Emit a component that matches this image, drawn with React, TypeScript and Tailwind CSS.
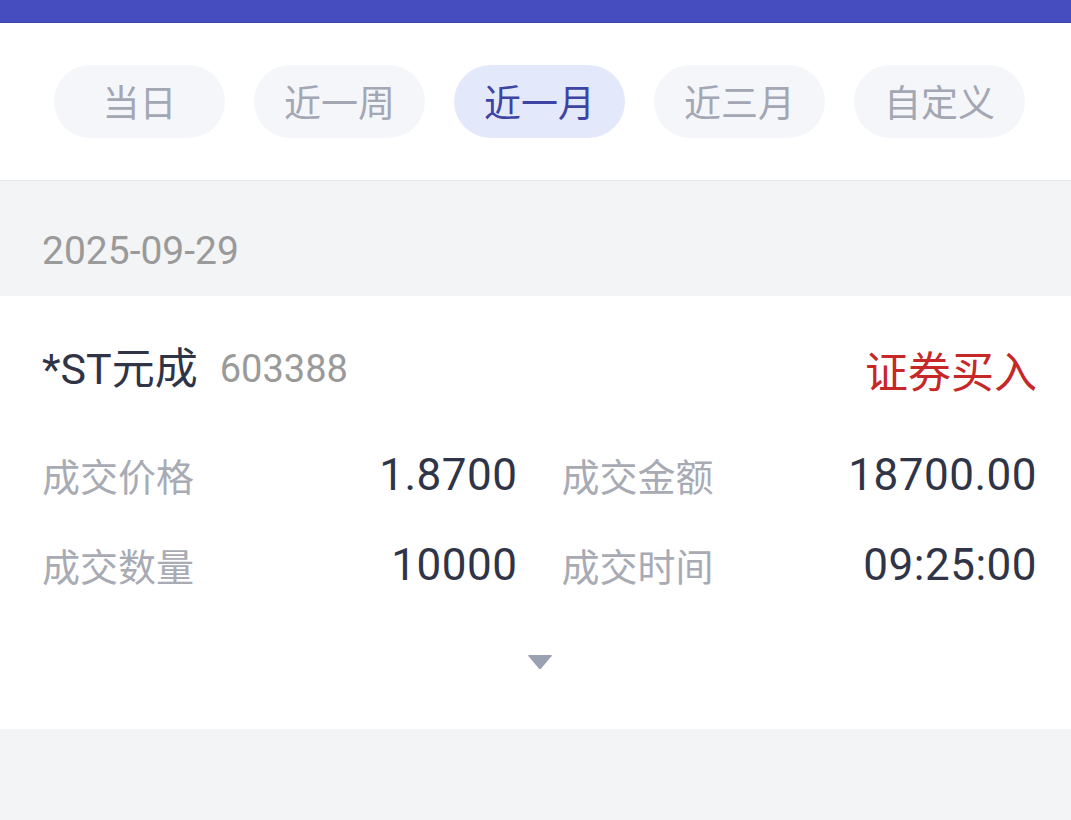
import { ReactNode } from "react";

const tabs = ["当日", "近一周", "近一月", "近三月", "自定义"];
const active = "近一月";

const cjk = "font-['Noto_Sans_CJK_SC',sans-serif]";
const num = "font-['Roboto','Noto_Sans_CJK_SC',sans-serif]";

const Field = ({ label, value }: { label: string; value: ReactNode }) => (
  <div className="flex flex-1 items-center justify-between">
    <span className={`${cjk} text-[38px] leading-none text-[#a8abb4]`}>{label}</span>
    <span className={`${num} text-[44px] leading-none tracking-[0.5px] text-[#2f3447]`}>{value}</span>
  </div>
);

export default function App() {
  return (
    <div className="min-h-[820px] w-[1071px] bg-[#f3f4f6]">
      <div className="h-[23px] border-b border-[#3b42a8] bg-[#454dbf]" />

      <div className="flex gap-[29px] border-b border-[#e5e7eb] bg-white pt-[42px] pb-[42px] pl-[54px]">
        {tabs.map((t) => (
          <div
            key={t}
            className={`${cjk} flex h-[73px] w-[171px] items-center justify-center rounded-full text-[37px] ${
              t === active ? "bg-[#e4e8fb] text-[#3d44a3]" : "bg-[#f5f6fa] text-[#a3a7b3]"
            }`}
          >
            {t}
          </div>
        ))}
      </div>

      <div className="h-[115px] pt-[50px] pl-[42px]">
        <span className={`${num} text-[39px] leading-[40px] text-[#9a9a9a]`}>2025-09-29</span>
      </div>

      <div className="bg-white pt-[36px] pr-[34px] pb-[59px] pl-[42px]">
        <div className="flex h-[74px] items-center justify-between">
          <div className="flex items-center">
            <span className={`${num} text-[43px] leading-none text-[#2f3447]`}>*ST元成</span>
            <span className={`${num} ml-[22px] text-[38px] leading-none text-[#9a9a9a]`}>603388</span>
          </div>
          <span className={`${cjk} text-[43px] leading-none text-[#c62828]`}>证券买入</span>
        </div>

        <div className="mt-[24px] flex h-[90px] items-center gap-[44px]">
          <Field label="成交价格" value="1.8700" />
          <Field label="成交金额" value="18700.00" />
        </div>
        <div className="flex h-[90px] items-center gap-[44px]">
          <Field label="成交数量" value="10000" />
          <Field label="成交时间" value="09:25:00" />
        </div>

        <div className="mt-[44px] flex justify-center">
          <svg width="26" height="16" viewBox="0 0 26 16">
            <path d="M2 1 L24 1 Q25.5 1 24.5 2.3 L14.2 14.5 Q13 15.8 11.8 14.5 L1.5 2.3 Q0.5 1 2 1 Z" fill="#9aa1b3" />
          </svg>
        </div>
      </div>
    </div>
  );
}
